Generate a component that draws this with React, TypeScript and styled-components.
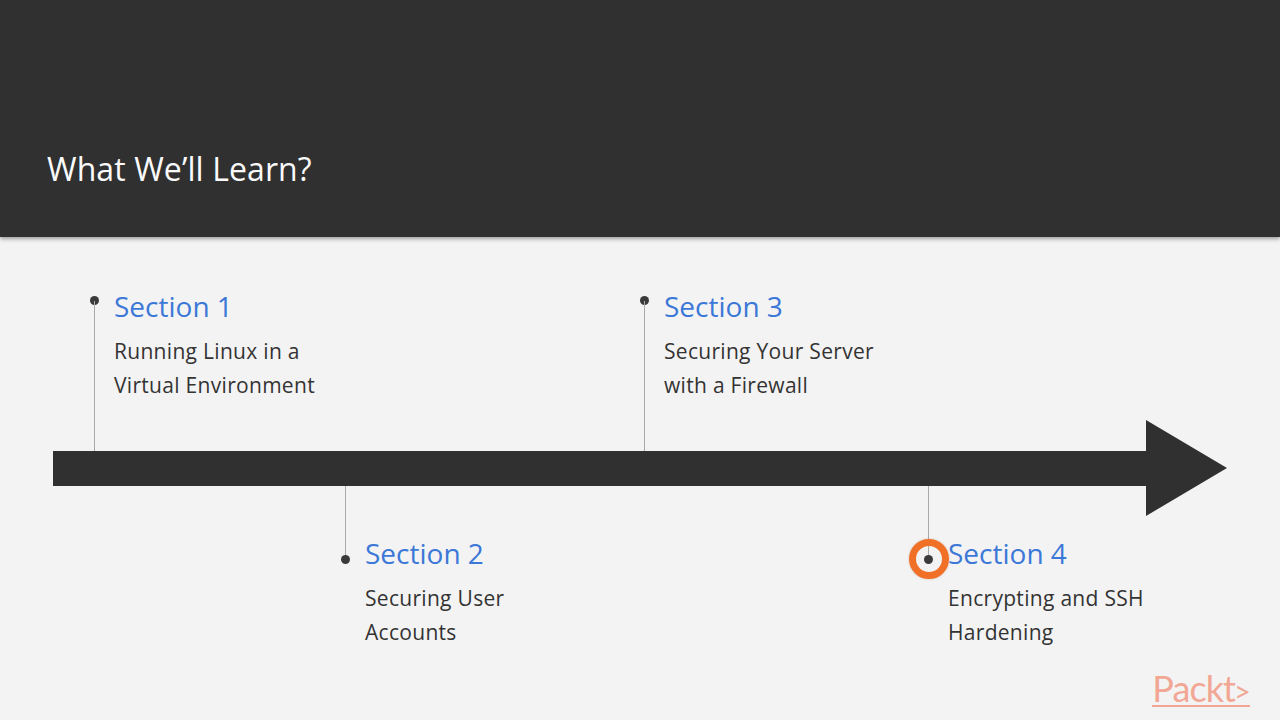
import React from "react";
import styled, { createGlobalStyle } from "styled-components";

const Global = createGlobalStyle`
  html, body { margin: 0; padding: 0; background: #f3f3f3; }
  body { font-family: "Open Sans", "Noto Sans", sans-serif; }
`;

const Stage = styled.div`
  position: relative;
  width: 1280px;
  height: 720px;
  overflow: hidden;
  display: flex;
  flex-direction: column;
  background: #f3f3f3;
`;

const Header = styled.header`
  height: 237px;
  flex: none;
  box-sizing: border-box;
  background: #303030;
  box-shadow: 0 2px 4px rgba(0, 0, 0, 0.35);
  display: flex;
  align-items: flex-end;
  padding: 0 0 47px 47px;
`;

const Title = styled.h1`
  margin: 0;
  color: #fafafa;
  font-size: 32px;
  line-height: 42px;
  letter-spacing: 0.1px;
  font-weight: 400;
`;

const Row = styled.div<{ $columns: string }>`
  display: grid;
  grid-template-columns: ${(p) => p.$columns};
  flex: none;
`;

const TopRow = styled(Row)`
  height: 155px;
  margin-top: 59px;
`;

const BottomRow = styled(Row)`
  height: 180px;
`;

const Item = styled.article`
  display: flex;
  align-items: stretch;
  gap: 15px;
`;

const Stem = styled.div<{ $down?: boolean }>`
  width: 9px;
  flex: none;
  display: flex;
  flex-direction: ${(p) => (p.$down ? "column-reverse" : "column")};
  align-items: center;
  justify-content: flex-start;
  height: ${(p) => (p.$down ? "74px" : "auto")};
  position: relative;
`;

const Dot = styled.span`
  width: 9px;
  height: 9px;
  border-radius: 50%;
  background: #3a3a3a;
  flex: none;
  margin: 0 0 -4px;
`;

const Line = styled.span`
  width: 1px;
  flex: 1;
  background: #a9a9a9;
`;

const Copy = styled.div<{ $down?: boolean }>`
  padding-top: ${(p) => (p.$down ? "48px" : "0")};
  margin-top: ${(p) => (p.$down ? "0" : "-9px")};
`;

const Heading = styled.h2`
  margin: 0 0 9px;
  color: #3c78d8;
  font-size: 28px;
  line-height: 38px;
  font-weight: 400;
`;

const Body = styled.p`
  margin: 0;
  color: #333333;
  font-size: 21px;
  line-height: 34px;
  letter-spacing: 0.3px;
  font-weight: 400;
  white-space: pre-line;
`;

const ArrowWrap = styled.div`
  flex: none;
  height: 96px;
  margin: -31px 0 -30px 53px;
`;

const Ring = styled.span`
  position: absolute;
  left: -15.5px;
  bottom: -19px;
  width: 40px;
  height: 40px;
  box-sizing: border-box;
  border: 7px solid #f07028;
  border-radius: 50%;
  box-shadow: 0 0 2px rgba(120, 60, 20, 0.35);
`;

const Footer = styled.footer`
  position: absolute;
  right: 30px;
  bottom: 13px;
`;

const Logo = styled.div`
  color: #f2a795;
  font-family: "Lato", "Open Sans", sans-serif;
  font-size: 36px;
  line-height: 26px;
  font-weight: 400;
  letter-spacing: -0.9px;
  border-bottom: 2px solid #f2a795;
  padding-bottom: 1px;
`;

const LogoMark = styled.span`
  font-size: 29px;
  margin-left: -1px;
`;

type Entry = { title: string; body: string };

const TimelineEntry = ({ title, body, down, ring }: Entry & { down?: boolean; ring?: boolean }) => (
  <Item>
    <Stem $down={down}>
      <Dot />
      <Line />
      {ring && <Ring />}
    </Stem>
    <Copy $down={down}>
      <Heading>{title}</Heading>
      <Body>{body}</Body>
    </Copy>
  </Item>
);

export default function App() {
  return (
    <Stage>
      <Global />
      <Header>
        <Title>What We’ll Learn?</Title>
      </Header>
      <TopRow $columns="90px 550px 1fr">
        <span />
        <TimelineEntry title="Section 1" body={"Running Linux in a\nVirtual Environment"} />
        <TimelineEntry title="Section 3" body={"Securing Your Server\nwith a Firewall"} />
      </TopRow>
      <ArrowWrap>
        <svg width="1174" height="96" viewBox="0 0 1174 96" aria-hidden="true">
          <path d="M0 31H1093V0L1174 48L1093 96V66H0Z" fill="#303030" />
        </svg>
      </ArrowWrap>
      <BottomRow $columns="341px 583px 1fr">
        <span />
        <TimelineEntry down title="Section 2" body={"Securing User\nAccounts"} />
        <TimelineEntry down ring title="Section 4" body={"Encrypting and SSH\nHardening"} />
      </BottomRow>
      <Footer>
        <Logo>Packt<LogoMark>&gt;</LogoMark></Logo>
      </Footer>
    </Stage>
  );
}
